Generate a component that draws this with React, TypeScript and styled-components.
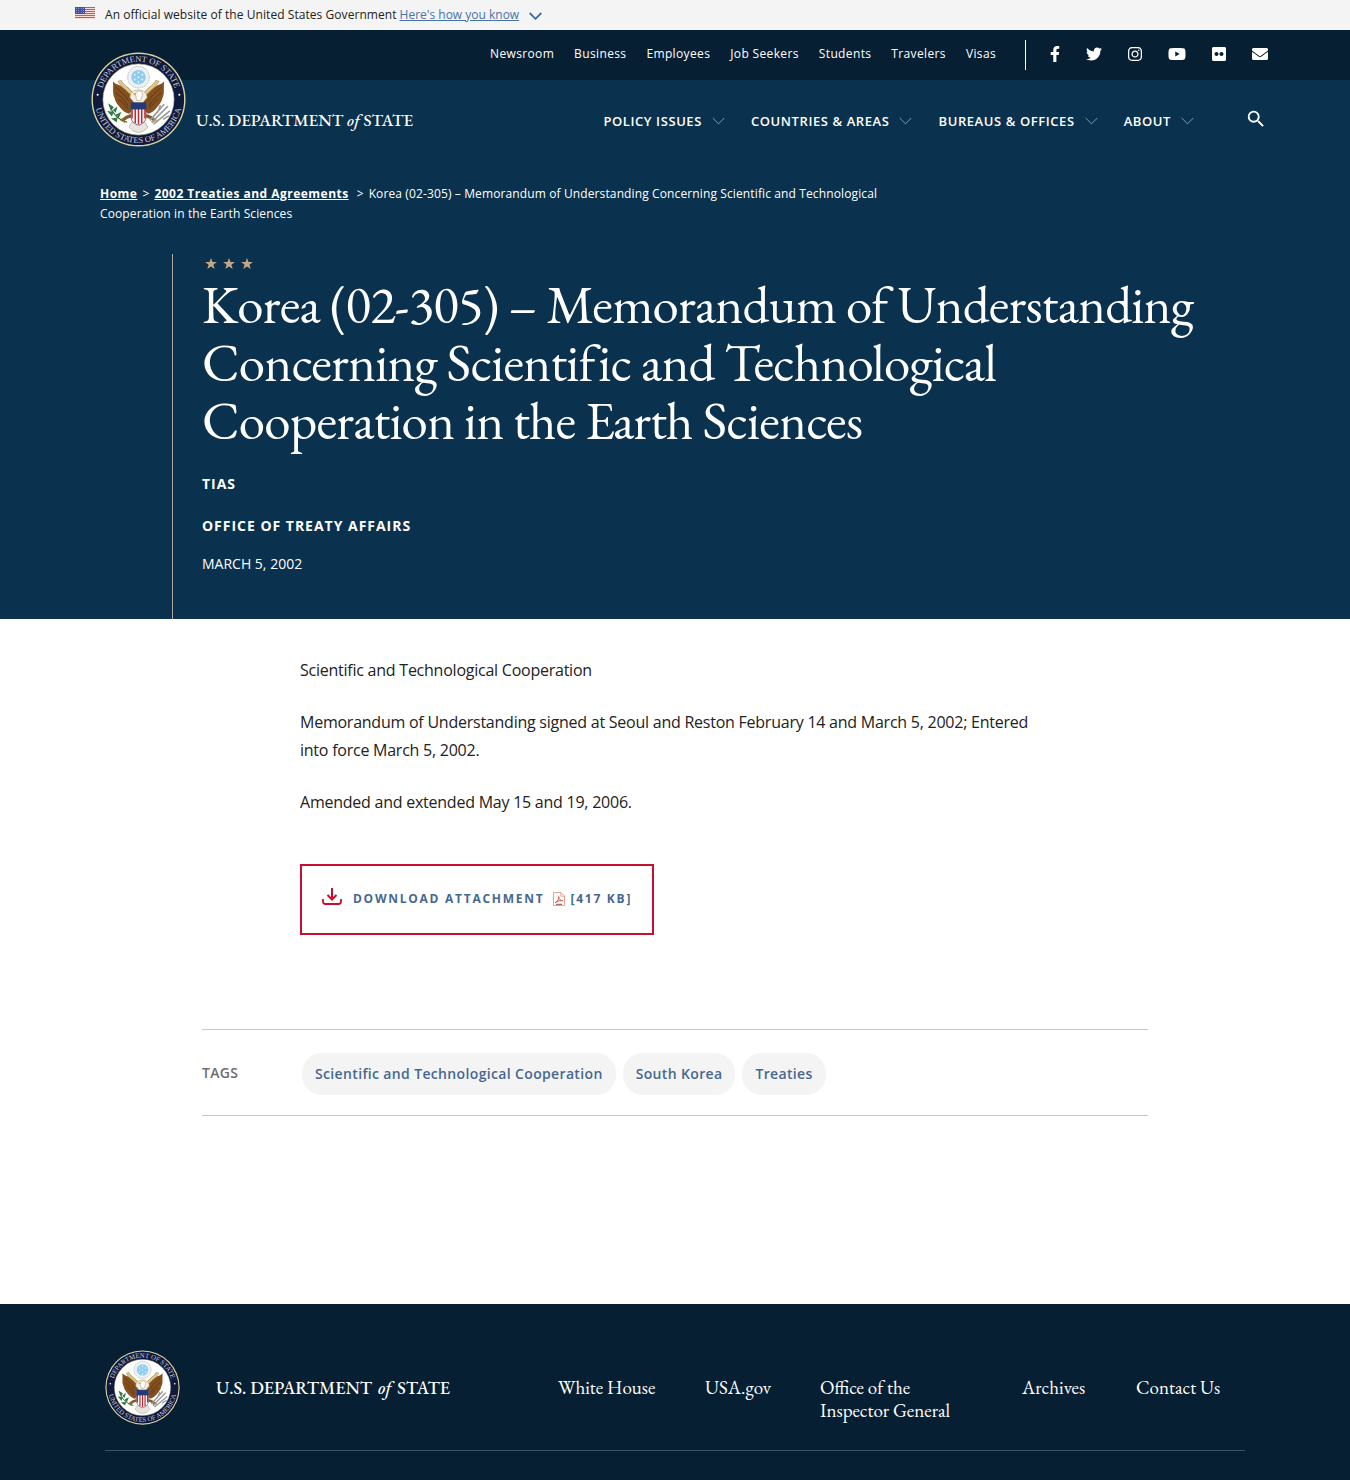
import React from "react";
import styled, { createGlobalStyle } from "styled-components";
import {
  FaFacebookF,
  FaTwitter,
  FaInstagram,
  FaYoutube,
  FaFlickr,
  FaEnvelope,
} from "react-icons/fa";
import { MdSearch } from "react-icons/md";

const sans = `"Open Sans", "Noto Sans", sans-serif`;
const serif = `"EB Garamond", "Liberation Serif", serif`;
const navy = "#0a314d";
const deepNavy = "#071f33";
const linkBlue = "#4773aa";
const slateBlue = "#46688f";
const red = "#c8102e";

const GlobalStyle = createGlobalStyle`
  *, *::before, *::after { box-sizing: border-box; }
  body { margin: 0; background: #fff; color: #222; font-family: ${sans}; }
  h1, p, ul { margin: 0; padding: 0; }
  ul { list-style: none; }
  a { color: inherit; text-decoration: none; }
  button { border: 0; padding: 0; background: none; font: inherit; color: inherit; cursor: pointer; }
  svg { display: block; flex: none; }
`;

/* Government banner */
const Banner = styled.div`
  display: flex;
  align-items: center;
  height: 30px;
  padding: 0 75px 2px;
  background: #f4f4f4;
  font-size: 12px;
  letter-spacing: 0.005em;
`;
const FlagIcon = styled.svg`
  width: 20px;
  height: 12px;
  margin: 0 10px 2px 0;
`;
const BannerButton = styled.button`
  display: flex;
  align-items: center;
  gap: 10px;
  margin-left: 3px;
  color: ${linkBlue};
  span { text-decoration: underline; }
  svg { margin-top: 3px; }
`;

/* Header */
const TopBar = styled.div`
  display: flex;
  justify-content: flex-end;
  align-items: center;
  height: 50px;
  padding: 0 82px;
  background: ${deepNavy};
  color: #fff;
`;
const TopLinks = styled.ul`
  display: flex;
  gap: 20px;
  margin-right: 29px;
  padding-bottom: 4px;
  font-size: 12px;
  letter-spacing: 0.03em;
`;
const Social = styled.ul`
  display: flex;
  align-items: center;
  gap: 26px;
  height: 30px;
  padding: 0 0 2px 24px;
  border-left: 1px solid #fff;
`;
const SocialItem = styled.li<{ $width: number }>`
  width: ${(p) => p.$width}px;
  svg { width: 100%; height: 16px; }
`;
const MainBar = styled.div`
  display: flex;
  justify-content: space-between;
  align-items: flex-start;
  padding: 0 86px 0 91px;
  background: ${navy};
  color: #fff;
`;
const Brand = styled.a`
  display: flex;
  align-items: center;
  gap: 10px;
  margin-top: -28px;
`;
const BrandName = styled.span<{ $size: number; $drop?: number; $gap?: number }>`
  padding-top: ${(p) => p.$drop ?? 0}px;
  font-family: ${serif};
  font-size: ${(p) => p.$size}px;
  font-weight: 500;
  line-height: 24px;
  white-space: nowrap;
  em { margin: 0 ${(p) => p.$gap ?? 0}px; }
`;
const SealArt = styled.svg<{ $size: number }>`
  width: ${(p) => p.$size}px;
  height: ${(p) => p.$size}px;
`;
const MainNav = styled.nav`
  display: flex;
  align-items: center;
  gap: 26px;
  padding-top: 28px;
`;
const NavButton = styled.button`
  display: flex;
  align-items: center;
  gap: 10px;
  height: 22px;
  font-size: 13px;
  font-weight: 600;
  letter-spacing: 0.045em;
  text-transform: uppercase;
`;
const SearchButton = styled.button`
  display: flex;
  margin: 0 -3px 4px 25px;
`;

/* Hero */
const Hero = styled.section`
  padding: 37px 100px 0;
  background: ${navy};
  color: #fff;
`;
const Crumbs = styled.nav`
  max-width: 800px;
  font-size: 12px;
  line-height: 20px;
  letter-spacing: 0.01em;
  a {
    font-weight: 700;
    letter-spacing: 0.04em;
    text-decoration: underline;
  }
`;
const CrumbMark = styled.span<{ $before?: number }>`
  margin: 0 5px 0 ${(p) => p.$before ?? 5}px;
`;
const HeroBody = styled.div`
  margin: 30px 0 0 72px;
  padding: 4px 0 45px 29px;
  border-left: 1px solid #a9a9a1;
`;
const Stars = styled.svg`
  width: 54px;
  height: 12px;
  color: #c4a585;
`;
const Title = styled.h1`
  max-width: 1020px;
  margin: 6px 0 24px;
  font-family: ${serif};
  font-size: 53px;
  font-weight: 400;
  line-height: 58px;
  letter-spacing: -0.015em;
`;
const Meta = styled.p`
  margin-bottom: 22px;
  font-size: 14px;
  line-height: 20px;
  font-weight: 700;
  letter-spacing: 0.07em;
  text-transform: uppercase;
`;
const PostDate = styled.p`
  margin-top: -4px;
  font-size: 14px;
  line-height: 20px;
`;

/* Article */
const Main = styled.main`
  max-width: 946px;
  margin: 0 auto;
  padding: 37px 0 188px;
`;
const Article = styled.article`
  margin: 0 98px;
  p {
    margin-bottom: 24px;
    font-size: 16px;
    line-height: 28px;
    letter-spacing: -0.015em;
  }
`;
const Download = styled.a`
  display: inline-flex;
  align-items: center;
  height: 71px;
  margin-top: 24px;
  padding: 0 20px 2px 19px;
  border: 2px solid ${red};
  color: ${slateBlue};
  font-size: 12px;
  font-weight: 700;
  letter-spacing: 0.145em;
  text-transform: uppercase;
  white-space: nowrap;
`;
const DownloadArt = styled.svg`
  width: 22px;
  height: 20px;
  margin: 0 10px 4px 0;
  color: ${red};
`;
const PdfArt = styled.svg`
  width: 12px;
  height: 14px;
  margin: 0 6px 0 8px;
`;
const TagRow = styled.section`
  display: flex;
  align-items: center;
  height: 87px;
  margin-top: 94px;
  border-top: 1px solid #c4c6c8;
  border-bottom: 1px solid #c4c6c8;
  font-size: 14px;
  font-weight: 600;
  letter-spacing: 0.025em;
`;
const TagLabel = styled.span`
  width: 100px;
  color: #6e6e6e;
`;
const TagList = styled.ul`
  display: flex;
  flex-wrap: wrap;
  gap: 7px;
  padding-top: 2px;
`;
const Tag = styled.a`
  display: block;
  padding: 0 13px;
  border-radius: 20px;
  background: #f4f4f4;
  color: ${slateBlue};
  line-height: 42px;
`;

/* Footer */
const Footer = styled.footer`
  padding: 46px 105px 30px;
  background: ${deepNavy};
  color: #fff;
`;
const FooterInner = styled.div`
  display: grid;
  grid-template-columns: 453px 1fr;
  align-items: start;
  padding-bottom: 25px;
  border-bottom: 1px solid #3c5266;
`;
const FooterBrand = styled.a`
  display: flex;
  align-items: center;
  gap: 36px;
`;
const FooterLinks = styled.ul`
  display: grid;
  grid-template-columns: 147px 115px 202px 114px 1fr;
  padding-top: 26px;
  font-family: ${serif};
  font-size: 19px;
  line-height: 23px;
`;
const FooterItem = styled.li<{ $wrap?: number }>`
  max-width: ${(p) => (p.$wrap ? `${p.$wrap}px` : "none")};
`;

function Flag() {
  return (
    <FlagIcon viewBox="0 0 20 12" aria-hidden="true">
      <rect width="20" height="12" fill="#fff" />
      {[0, 2, 4, 6, 8, 10].map((y) => (
        <rect key={y} y={y} width="20" height="1.2" fill="#d8523f" />
      ))}
      <rect width="10" height="7" fill="#3a4fa3" />
      {[1.2, 3.4, 5.6].map((y) =>
        [1.4, 3.8, 6.2, 8.6].map((x) => (
          <circle key={`${x}-${y}`} cx={x} cy={y} r="0.45" fill="#fff" />
        ))
      )}
    </FlagIcon>
  );
}

function Chevron({ width = 13, stroke = "#7f9bb3", weight = 1 }) {
  return (
    <svg width={width} height={8} viewBox="0 0 13 8" fill="none" aria-hidden="true">
      <path d="M0.7 1 6.5 6.8 12.3 1" stroke={stroke} strokeWidth={weight} />
    </svg>
  );
}

function Seal({ size, id }: { size: number; id: string }) {
  return (
    <SealArt $size={size} viewBox="0 0 100 100" role="img" aria-label="Seal">
      <defs>
        <path id={`${id}-top`} d="M10.200 50a39.800 39.800 0 0 1 79.600 0" />
        <path id={`${id}-bottom`} d="M4.200 50a45.800 45.800 0 0 0 91.600 0" />
      </defs>
      <circle cx="50" cy="50" r="49.5" fill="#d9d3a3" />
      <circle cx="50" cy="50" r="48" fill="#101a3c" />
      <circle cx="50" cy="50" r="37.4" fill="#fff" stroke="#c9c493" strokeWidth="0.6" />
      <g fill="#c6cbdc" fontFamily="Liberation Serif, serif" fontSize="9" textAnchor="middle">
        <text>
          <textPath href={`#${id}-top`} startOffset="50%">DEPARTMENT OF STATE</textPath>
        </text>
        <text>
          <textPath href={`#${id}-bottom`} startOffset="50%">UNITED STATES OF AMERICA</textPath>
        </text>
      </g>
      <circle cx="7" cy="45" r="1.1" fill="#fff" />
      <circle cx="93" cy="45" r="1.1" fill="#fff" />

      {/* glory of stars above the eagle */}
      <circle cx="50" cy="26.5" r="11.4" fill="#eef1f3" stroke="#b4b6b3" strokeWidth="1" strokeDasharray="1.6 0.9" />
      <circle cx="50" cy="26.5" r="7.6" fill="#8fcdf0" />
      {[[50, 21.5], [46, 24], [54, 24], [50, 26.5], [46, 29], [54, 29], [50, 31.5]].map(([x, y]) => (
        <circle key={`${x}-${y}`} cx={x} cy={y} r="1" fill="#e3f4fd" />
      ))}

      {/* wings */}
      <path
        d="M23 31C24 39 22 43 25 49c1 5 4 7 6 10 3 4 6 5 9 6l4-4 1-9-3-8c-3-5-8-6-12-9-3-1-5-2-7-4Z"
        fill="#85501f"
      />
      <path
        d="M77 31c-1 8 1 12-2 18-1 5-4 7-6 10-3 4-6 5-9 6l-4-4-1-9 3-8c3-5 8-6 12-9 3-1 5-2 7-4Z"
        fill="#85501f"
      />
      <path
        d="M26 37c5 5 9 7 14 15M26 43c5 4 9 7 13 14M29 50c4 2 6 5 10 10M74 37c-5 5-9 7-14 15M74 43c-5 4-9 7-13 14M71 50c-4 2-6 5-10 10"
        stroke="#5b3413"
        strokeWidth="0.9"
        fill="none"
      />
      {/* scroll */}
      <path
        d="M30 30c1 3 4 6 8 9l7 7M70 30c-1 3-4 6-8 9l-7 7"
        stroke="#a98b4c"
        strokeWidth="4"
        fill="none"
      />
      <path
        d="M30 30c1 3 4 6 8 9l7 7M70 30c-1 3-4 6-8 9l-7 7"
        stroke="#e0c98f"
        strokeWidth="2.6"
        fill="none"
      />
      {/* head */}
      <path d="M41 48c0-5 4-8 9-8s9 3 9 8l-5 6h-8Z" fill="#f4efe2" stroke="#a5906a" strokeWidth="0.6" />
      <path d="M47 45c0-3 2-4 4-4s4 2 3 5l-2 5h-4Z" fill="#fff" stroke="#a5906a" strokeWidth="0.6" />
      <path d="m47 43-3 1 3 2Z" fill="#d79f2a" />
      {/* tail and legs */}
      <path d="M43 74h14l3 5-4 4-6 2-6-2-4-4Z" fill="#e6e4de" stroke="#aaa79d" strokeWidth="0.7" />
      <path d="M42 67c-4 1-7 3-9 5M58 67c4 1 7 3 9 5" stroke="#8a5a24" strokeWidth="3.4" fill="none" />
      <path d="m31 71 5 3M69 71l-5 3" stroke="#d3a447" strokeWidth="2.4" />
      {/* olive branch */}
      <path d="M20 57c3 9 8 14 18 17" stroke="#2f6b3c" strokeWidth="1.2" fill="none" />
      <path
        d="m18 54 6 4-3 4Zm-1 8 7 1-2 5Zm4 8 7-1-1 5Zm7-13-2 7-3-3Zm4 6-3 7-3-4Z"
        fill="#2f7a43"
      />
      {/* arrows */}
      <path
        d="m64 74 17-17M62 72l15-17M66 76l17-14M70 64l3-8M76 71l6-4"
        stroke="#979b9a"
        strokeWidth="1.7"
        fill="none"
      />
      {/* shield */}
      <path d="M42 54h16v14c0 5-4 8-8 9-4-1-8-4-8-9Z" fill="#fff" stroke="#3c2b4a" strokeWidth="0.7" />
      <path d="M43.2 59v11M46.6 59v16M50 59v17M53.4 59v16M56.8 59v11" stroke="#c1272d" strokeWidth="1.6" />
      <path d="M42 53h16v7.500H42Z" fill="#263a79" />
    </SealArt>
  );
}

function StarRow() {
  return (
    <Stars viewBox="0 0 54 12" fill="currentColor" aria-hidden="true">
      {[9, 27, 45].map((x) => (
        <path
          key={x}
          transform={`translate(${x} 6)`}
          d="M0-6 1.500-1.900 5.900-1.900 2.400.8 3.700 5 0 2.400-3.700 5-2.400.8-5.900-1.900-1.500-1.900Z"
        />
      ))}
    </Stars>
  );
}

function DownloadIcon() {
  return (
    <DownloadArt viewBox="0 0 22 20" fill="none" stroke="currentColor" strokeWidth="2" aria-hidden="true">
      <path d="M11 1v11M6.500 8 11 12.500 15.500 8" />
      <path d="M2 12v2.500Q2 17 4.500 17h13q2.500 0 2.500-2.500V12" strokeWidth="1.800" />
    </DownloadArt>
  );
}

function PdfIcon() {
  return (
    <PdfArt viewBox="0 0 12 14" fill="none" aria-hidden="true">
      <path d="M.5.5h7.500l3.500 3.500v9.500H.5Z" fill="#fff" stroke="#e0a596" />
      <path d="M7.800.8v3.400h3.400" stroke="#e0a596" />
      <path d="M2 10.800c3-1.500 4-4 3.600-6.300.5 3 2 4.500 4.400 4.200-3-.4-5.500.4-8 2.100Z" stroke="#d4604c" />
      <path d="M3 12.300h6" stroke="#a34132" />
    </PdfArt>
  );
}

const topLinks = ["Newsroom", "Business", "Employees", "Job Seekers", "Students", "Travelers", "Visas"];
const social = [
  { label: "Facebook", Icon: FaFacebookF, width: 10 },
  { label: "Twitter", Icon: FaTwitter, width: 16 },
  { label: "Instagram", Icon: FaInstagram, width: 14 },
  { label: "YouTube", Icon: FaYoutube, width: 18 },
  { label: "Flickr", Icon: FaFlickr, width: 14 },
  { label: "Email", Icon: FaEnvelope, width: 16 },
];
const sections = ["Policy Issues", "Countries & Areas", "Bureaus & Offices", "About"];
const tags = ["Scientific and Technological Cooperation", "South Korea", "Treaties"];
const footerLinks = [
  { text: "White House" },
  { text: "USA.gov" },
  { text: "Office of the Inspector General", wrap: 150 },
  { text: "Archives" },
  { text: "Contact Us" },
];

function DepartmentName({ size, drop, gap }: { size: number; drop?: number; gap?: number }) {
  return (
    <BrandName $size={size} $drop={drop} $gap={gap}>
      U.S. DEPARTMENT <em>of</em> STATE
    </BrandName>
  );
}

export default function App() {
  return (
    <>
      <GlobalStyle />
      <Banner>
        <Flag />
        <span>An official website of the United States Government</span>
        <BannerButton type="button">
          <span>Here's how you know</span>
          <Chevron stroke="#3f6a9c" weight={1.8} />
        </BannerButton>
      </Banner>

      <header>
        <TopBar>
          <TopLinks>
            {topLinks.map((t) => (
              <li key={t}><a href="#">{t}</a></li>
            ))}
          </TopLinks>
          <Social>
            {social.map(({ label, Icon, width }) => (
              <SocialItem key={label} $width={width}>
                <a href="#" aria-label={label}><Icon /></a>
              </SocialItem>
            ))}
          </Social>
        </TopBar>
        <MainBar>
          <Brand href="#">
            <Seal size={95} id="header-seal" />
            <DepartmentName size={17} drop={40} />
          </Brand>
          <MainNav>
            {sections.map((t) => (
              <NavButton type="button" key={t}>
                {t}
                <Chevron />
              </NavButton>
            ))}
            <SearchButton type="button" aria-label="Search">
              <MdSearch size={22} />
            </SearchButton>
          </MainNav>
        </MainBar>
      </header>

      <Hero>
        <Crumbs aria-label="Breadcrumb">
          <a href="#">Home</a>
          <CrumbMark>&gt;</CrumbMark>
          <a href="#">2002 Treaties and Agreements</a>
          <CrumbMark $before={8}>&gt;</CrumbMark>
          Korea (02-305) – Memorandum of Understanding Concerning Scientific and Technological Cooperation in the Earth Sciences
        </Crumbs>
        <HeroBody>
          <StarRow />
          <Title>
            Korea (02-305) – Memorandum of Understanding Concerning Scientific and Technological Cooperation in the Earth Sciences
          </Title>
          <Meta>TIAS</Meta>
          <Meta>Office of Treaty Affairs</Meta>
          <PostDate>MARCH 5, 2002</PostDate>
        </HeroBody>
      </Hero>

      <Main>
        <Article>
          <p>Scientific and Technological Cooperation</p>
          <p>Memorandum of Understanding signed at Seoul and Reston February 14 and March 5, 2002; Entered into force March 5, 2002.</p>
          <p>Amended and extended May 15 and 19, 2006.</p>
          <Download href="#">
            <DownloadIcon />
            Download Attachment
            <PdfIcon />
            [417 KB]
          </Download>
        </Article>
        <TagRow>
          <TagLabel>TAGS</TagLabel>
          <TagList>
            {tags.map((t) => (
              <li key={t}><Tag href="#">{t}</Tag></li>
            ))}
          </TagList>
        </TagRow>
      </Main>

      <Footer>
        <FooterInner>
          <FooterBrand href="#">
            <Seal size={75} id="footer-seal" />
            <DepartmentName size={18} gap={2} />
          </FooterBrand>
          <FooterLinks>
            {footerLinks.map(({ text, wrap }) => (
              <FooterItem key={text} $wrap={wrap}><a href="#">{text}</a></FooterItem>
            ))}
          </FooterLinks>
        </FooterInner>
      </Footer>
    </>
  );
}
